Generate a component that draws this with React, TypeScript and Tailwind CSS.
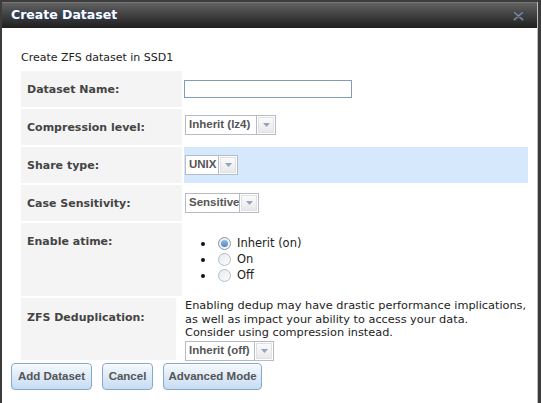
import React from "react";

const labelCls =
  "bg-[#f4f4f4] pl-[6px] pt-[12px] text-[11px] leading-[13px] font-bold text-[#444] font-['DejaVu_Sans',sans-serif]";

const Select = ({ text, w }: { text: string; w: number }) => (
  <div className="flex h-[20px] border border-[#b6bbc8] bg-white">
    <div
      className="flex items-center pl-[3px] text-[11.5px] font-bold text-[#555] font-['Liberation_Sans',sans-serif]"
      style={{ width: w }}
    >
      {text}
    </div>
    <div className="w-[19px] border-l border-[#b6bbc8] p-px">
      <div className="h-full w-full border border-[#dfe1e6] bg-gradient-to-b from-[#fbfbfb] to-[#e9e9ea] flex items-center justify-center">
        <svg width="7" height="4" viewBox="0 0 7 4">
          <path d="M0 0h7L3.5 4z" fill="#8fa3c4" />
        </svg>
      </div>
    </div>
  </div>
);

const Radio = ({ checked, label }: { checked?: boolean; label: string }) => (
  <div className="flex items-center h-[16px]">
    <span className="w-[4px] h-[4px] rounded-full bg-[#111]" />
    <span
      className={
        "ml-[13px] w-[13px] h-[13px] rounded-full border flex items-center justify-center bg-gradient-to-br from-[#e6eaee] to-[#fbfcfd] " +
        (checked ? "border-[#8a96a6]" : "border-[#b4bcc6]")
      }
    >
      {checked && (
        <span className="w-[7px] h-[7px] rounded-full bg-gradient-to-b from-[#8fbbe4] to-[#4f88c2]" />
      )}
    </span>
    <span className="ml-[6px] text-[11.5px] text-[#222] font-['DejaVu_Sans',sans-serif]">
      {label}
    </span>
  </div>
);

const Button = ({ text, w }: { text: string; w: number }) => (
  <button
    className="h-[27px] rounded-[4px] border border-[#86a8cc] bg-gradient-to-b from-[#f5f9fd] to-[#c6dcf2] text-[11.5px] font-bold text-[#555] font-['Liberation_Sans',sans-serif] shadow-[inset_0_1px_0_#fff]"
    style={{ width: w }}
  >
    {text}
  </button>
);

export default function App() {
  return (
    <div className="w-[541px] h-[403px] overflow-hidden bg-[#3c3c3c] pt-[2px] pl-[2px] pr-[3px]">
      <div className="h-full bg-white border-r border-[#bdbdbd] flex flex-col">
        {/* title bar */}
        <div className="h-[26px] shrink-0 bg-gradient-to-b from-[#626262] to-[#1f1f1f] border-t border-[#777] flex items-center justify-between pl-[9px] pr-[13px]">
          <span className="text-[12.5px] font-bold text-white font-['DejaVu_Sans',sans-serif] [text-shadow:0_0_2px_#1c3f8c]">
            Create Dataset
          </span>
          <svg width="11" height="10" viewBox="0 0 11 10">
            <path d="M1.5 1.5l8 7M9.5 1.5l-8 7" stroke="#3f4854" strokeWidth="3.2" strokeLinecap="round" />
            <path d="M1.5 1.5l8 7M9.5 1.5l-8 7" stroke="#7e8b9b" strokeWidth="1.4" strokeLinecap="round" />
          </svg>
        </div>

        <div className="pl-[19px] pt-[23px]">
          <div className="text-[11px] leading-[13px] text-[#222] font-['DejaVu_Sans',sans-serif]">
            Create ZFS dataset in SSD1
          </div>

          <div className="mt-[7px] flex flex-col gap-[2px] w-[507px]">
            <div className="flex h-[36px] gap-[2px]">
              <div className={labelCls + " w-[161px]"}>Dataset Name:</div>
              <div className="flex-1 flex items-center">
                <input className="w-[168px] h-[18px] border border-[#7f9db9] outline-none" />
              </div>
            </div>

            <div className="flex h-[36px] gap-[2px]">
              <div className={labelCls + " w-[161px]"}>Compression level:</div>
              <div className="flex-1 flex items-center pl-px pb-[4px]">
                <Select text="Inherit (lz4)" w={70} />
              </div>
            </div>

            <div className="flex h-[36px] gap-[2px]">
              <div className={labelCls + " w-[161px]"}>Share type:</div>
              <div className="flex-1 flex items-center pl-px bg-[#d6e9fc]">
                <Select text="UNIX" w={32} />
              </div>
            </div>

            <div className="flex h-[36px] gap-[2px]">
              <div className={labelCls + " w-[161px]"}>Case Sensitivity:</div>
              <div className="flex-1 flex items-center pl-px">
                <Select text="Sensitive" w={53} />
              </div>
            </div>

            <div className="flex h-[73px] gap-[2px]">
              <div className={labelCls + " w-[161px]"}>Enable atime:</div>
              <div className="flex-1 flex flex-col justify-center pl-[17px]">
                <Radio checked label="Inherit (on)" />
                <Radio label="On" />
                <Radio label="Off" />
              </div>
            </div>

            <div className="flex h-[62px] gap-[2px]">
              <div className={labelCls + " w-[155px] pt-[13px]"}>ZFS Deduplication:</div>
              <div className="flex-1 pl-[7px] pt-px">
                <div className="text-[11.3px] leading-[13.5px] text-[#222] font-['DejaVu_Sans',sans-serif]">
                  Enabling dedup may have drastic performance implications,
                  <br />
                  as well as impact your ability to access your data.
                  <br />
                  Consider using compression instead.
                </div>
                <div className="mt-px flex">
                  <Select text="Inherit (off)" w={68} />
                </div>
              </div>
            </div>
          </div>
        </div>

        <div className="flex pl-[9px] mt-[3px] gap-[10px]">
          <Button text="Add Dataset" w={81} />
          <Button text="Cancel" w={51} />
          <Button text="Advanced Mode" w={99} />
        </div>
      </div>
    </div>
  );
}
